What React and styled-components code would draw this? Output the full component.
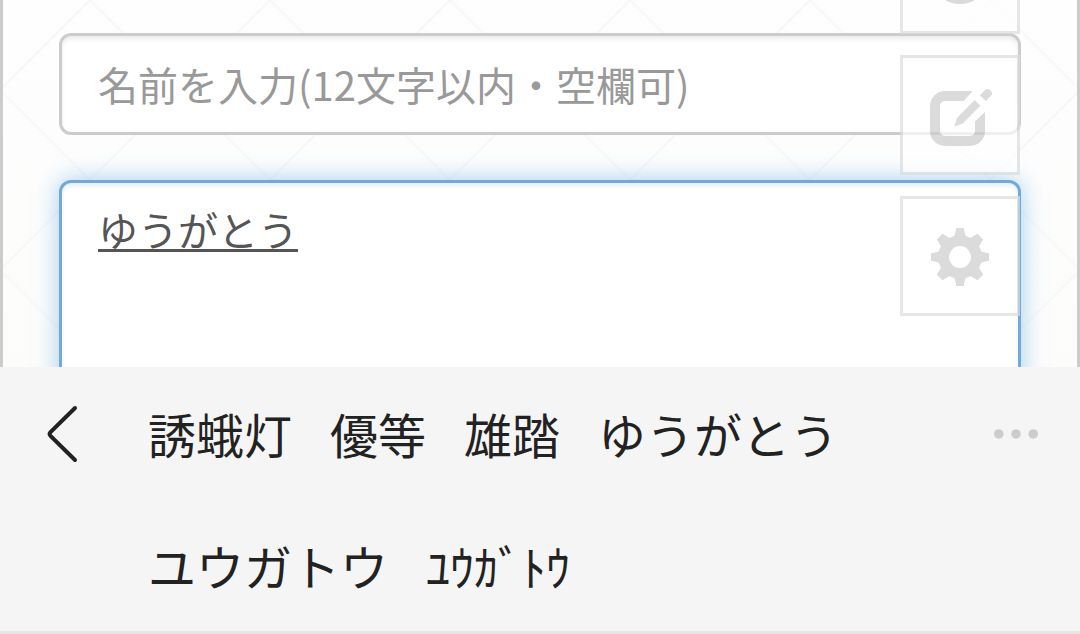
import React, { useState } from 'react';
import styled, { createGlobalStyle, css } from 'styled-components';

const GlobalStyle = createGlobalStyle`
  *, *::before, *::after { box-sizing: border-box; }
  body {
    margin: 0;
    font-family: "Noto Sans CJK JP", sans-serif;
    font-weight: 400;
    background: #fff;
  }
`;

const Screen = styled.div`
  display: flex;
  flex-direction: column;
  height: 100vh;
  overflow: hidden;
`;

const line = (angle) => css`
  linear-gradient(
    ${angle},
    transparent calc(25% - 2px), #f7f7f8 25%, transparent calc(25% + 2px),
    transparent calc(75% - 2px), #f7f7f8 75%, transparent calc(75% + 2px)
  )
`;

const Page = styled.main`
  position: relative;
  flex: 1 1 0;
  min-height: 0;
  overflow: hidden;
  padding: 33px 56px 0;
  border: solid #ccc;
  border-width: 0 3px;
  background-color: #fdfdfc;
  background-image: ${line('45deg')}, ${line('135deg')},
    linear-gradient(#fefefe, #fcfcfb);
  background-size: 180px 180px, 180px 180px, auto;
  background-origin: border-box;
`;

const Form = styled.form`
  display: flex;
  flex-direction: column;
  gap: 45px;
`;

const field = css`
  display: block;
  width: 100%;
  margin: 0;
  padding: 18px 36px;
  border: 3px solid #ccc;
  border-radius: 12px;
  outline: none;
  background: #fff;
  color: #555;
  font: inherit;
  font-size: 40px;
  line-height: 56px;
  box-shadow: inset 0 3px 4px rgba(0, 0, 0, 0.08);
`;

const NameInput = styled.input`
  ${field}
  height: 102px;
  &::placeholder { color: #999; opacity: 1; }
`;

const MessageBox = styled.textarea`
  ${field}
  flex: none;
  height: 300px;
  resize: none;
  border-color: #74a9d6;
  box-shadow: inset 0 3px 4px rgba(102, 175, 233, 0.2),
    0 0 24px rgba(102, 175, 233, 0.6);
  text-decoration: underline 3px;
  text-decoration-skip-ink: none;
  text-underline-offset: 3px;
`;

const SideMenu = styled.nav`
  position: absolute;
  top: -86px;
  right: 57px;
  display: flex;
  flex-direction: column;
  gap: 21px;
`;

const SideButton = styled.button`
  display: flex;
  align-items: center;
  justify-content: center;
  width: 120px;
  height: 120px;
  padding: 0;
  border: 3px solid #dcdcdc;
  background: #fff;
  color: #ccc;
  opacity: 0.7;
  svg { display: block; overflow: visible; }
`;

const Keyboard = styled.section`
  display: grid;
  grid-template-columns: 148px 1fr 128px;
  align-items: start;
  border-bottom: 3px solid #e5e5e5;
  background: #f5f5f5;
`;

const BarButton = styled.button`
  display: flex;
  align-items: center;
  justify-content: ${(p) => p.$align};
  height: 132px;
  padding: 0 42px;
  border: 0;
  background: none;
  color: ${(p) => p.$tone};
  svg { display: block; }
`;

const Candidates = styled.div`
  display: flex;
  flex-wrap: wrap;
  column-gap: 38px;
`;

const Candidate = styled.button`
  height: 132px;
  padding: 0;
  border: 0;
  background: none;
  color: #222;
  font: inherit;
  font-size: 48px;
  line-height: 72px;
  white-space: nowrap;
`;

const HelpIcon = () => (
  <svg width="64" height="64" viewBox="0 0 64 64" aria-hidden="true">
    <circle cx="32" cy="32" r="25" fill="none" stroke="currentColor" strokeWidth="10" />
  </svg>
);

const EditIcon = () => (
  <svg width="64" height="64" viewBox="0 0 64 64" fill="currentColor" aria-hidden="true">
    <path d="M44.7 8H17A15 15 0 0 0 2 23V48A15 15 0 0 0 17 63H42A15 15 0 0 0 57 48V29L47 38.5V48A5 5 0 0 1 42 53H17A5 5 0 0 1 12 48V23A5 5 0 0 1 17 18H35.6Z" />
    <path d="M46.7 17L52.3 22.7L34.5 40.8L26.3 43.5L29 35Z" />
    <path d="M52 12.3L56.8 7.4Q59.6 4.8 62.4 7.5Q65.4 10.4 62.8 13L57.7 18Z" />
  </svg>
);

const GearIcon = () => (
  <svg width="64" height="64" viewBox="-32 -33 64 64" fill="currentColor" aria-hidden="true">
    <path
      fillRule="evenodd"
      d="M-3.6-29H3.6L5.5-21.3L10.7-19L17.4-23.2L23.2-17.4L19-10.7L21.3-5.5L29-3.6V3.6L21.3 5.5L19 10.7L23.2 17.4L17.4 23.2L10.7 19L5.5 21.3L3.6 29H-3.6L-5.5 21.3L-10.7 19L-17.4 23.2L-23.2 17.4L-19 10.7L-21.3 5.5L-29 3.6V-3.6L-21.3-5.5L-19-10.7L-23.2-17.4L-17.4-23.2L-10.7-19L-5.5-21.3ZM0-11A11 11 0 0 0 0 11A11 11 0 0 0 0-11Z"
    />
  </svg>
);

const BackIcon = () => (
  <svg width="40" height="60" viewBox="0 0 40 60" aria-hidden="true">
    <path d="M33 5L8.5 29.2Q6.8 31 8.5 32.8L33 57" fill="none" stroke="currentColor" strokeWidth="4" strokeLinecap="round" />
  </svg>
);

const MoreIcon = () => (
  <svg width="46" height="12" viewBox="0 0 46 12" fill="currentColor" aria-hidden="true">
    <circle cx="5" cy="7" r="5" />
    <circle cx="23" cy="7" r="5" />
    <circle cx="41" cy="7" r="5" />
  </svg>
);

const words = ['誘蛾灯', '優等', '雄踏', 'ゆうがとう', 'ユウガトウ', 'ﾕｳｶﾞﾄｳ'];

export default function App() {
  const [message, setMessage] = useState('ゆうがとう');
  return (
    <>
      <GlobalStyle />
      <Screen>
        <Page>
          <Form>
            <NameInput
              type="text"
              aria-label="名前"
              placeholder="名前を入力(12文字以内・空欄可)"
            />
            <MessageBox
              aria-label="本文"
              spellCheck={false}
              value={message}
              onChange={(e) => setMessage(e.target.value)}
            />
          </Form>
          <SideMenu>
            <SideButton type="button" aria-label="ヘルプ"><HelpIcon /></SideButton>
            <SideButton type="button" aria-label="書き込む"><EditIcon /></SideButton>
            <SideButton type="button" aria-label="設定"><GearIcon /></SideButton>
          </SideMenu>
        </Page>
        <Keyboard>
          <BarButton type="button" aria-label="戻る" $align="flex-start" $tone="#222"><BackIcon /></BarButton>
          <Candidates>
            {words.map((word) => (
              <Candidate type="button" key={word} onClick={() => setMessage(word)}>{word}</Candidate>
            ))}
          </Candidates>
          <BarButton type="button" aria-label="その他" $align="flex-end" $tone="#ccc"><MoreIcon /></BarButton>
        </Keyboard>
      </Screen>
    </>
  );
}
